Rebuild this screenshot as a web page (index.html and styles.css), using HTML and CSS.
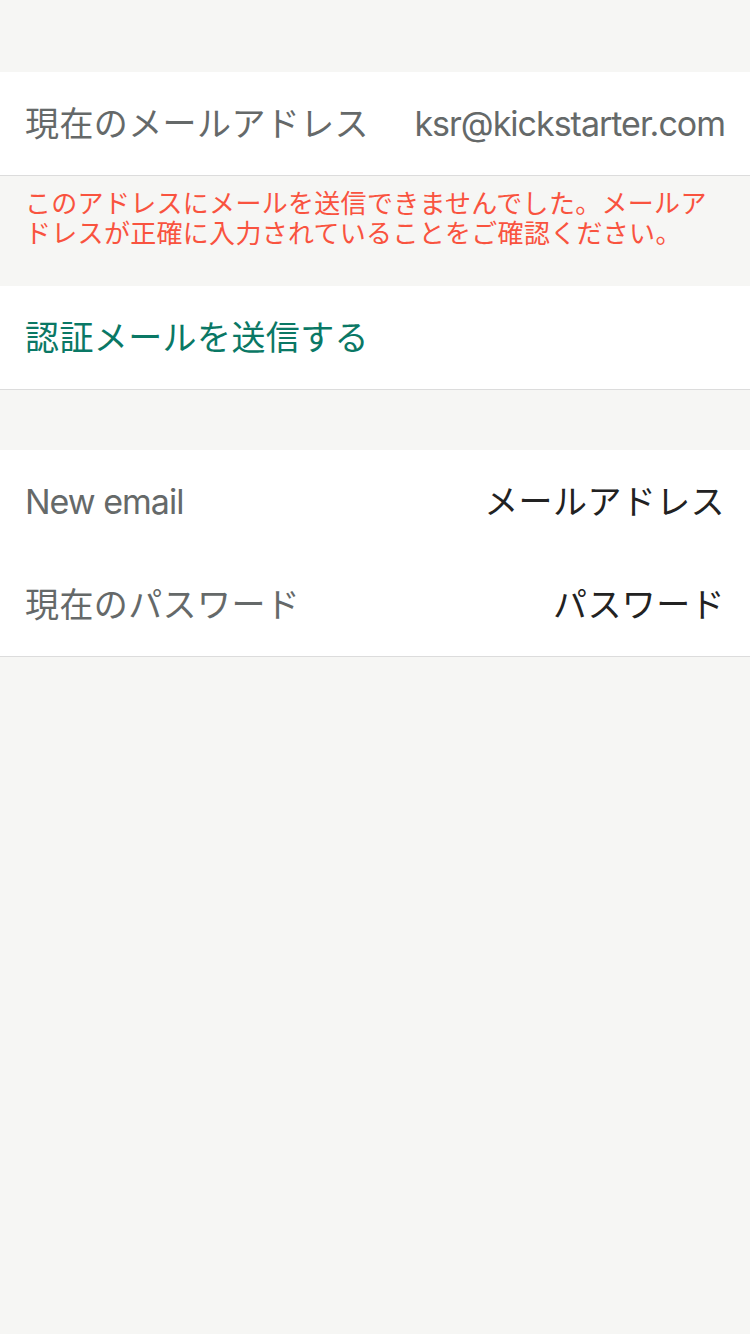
FILE: index.html
```html
<!DOCTYPE html>
<html lang="ja">
<head>
<meta charset="utf-8">
<link rel="stylesheet" href="styles.css">
</head>
<body>
<div class="screen">
  <div class="top-gap"></div>
  <div class="group">
    <div class="row">
      <span class="label">現在のメールアドレス</span>
      <span class="value muted latin">ksr@kickstarter.com</span>
    </div>
  </div>
  <div class="error">このアドレスにメールを送信できませんでした。メールアドレスが正確に入力されていることをご確認ください。</div>
  <div class="group">
    <div class="row">
      <span class="action">認証メールを送信する</span>
    </div>
  </div>
  <div class="section-gap"></div>
  <div class="group">
    <div class="row">
      <span class="label latin">New email</span>
      <span class="value">メールアドレス</span>
    </div>
    <div class="row">
      <span class="label">現在のパスワード</span>
      <span class="value">パスワード</span>
    </div>
  </div>
</div>
</body>
</html>
```

FILE: styles.css
```css
html, body {
  margin: 0;
  padding: 0;
  background: #f6f6f4;
}
.screen {
  width: 750px;
  min-height: 1334px;
  font-family: Inter, "Noto Sans CJK JP", sans-serif;
  -webkit-font-smoothing: antialiased;
}
.top-gap {
  height: 72px;
}
.section-gap {
  height: 60px;
}
.group {
  background: #ffffff;
  border-bottom: 1px solid #dcdcdc;
}
.row {
  height: 103px;
  display: flex;
  align-items: center;
  justify-content: space-between;
  padding: 0 25px;
  font-size: 34px;
  line-height: 40px;
  letter-spacing: 0.4px;
}
.latin {
  letter-spacing: -1px;
}
.label {
  color: #656969;
}
.value {
  color: #222222;
}
.value.muted {
  color: #656969;
}
.action {
  color: #0a7865;
}
.error {
  box-sizing: border-box;
  height: 110px;
  padding: 11px 25px 0;
  font-size: 26px;
  line-height: 30px;
  letter-spacing: 0.3px;
  color: #f9533f;
  font-family: "Noto Sans CJK JP", sans-serif;
}
```
